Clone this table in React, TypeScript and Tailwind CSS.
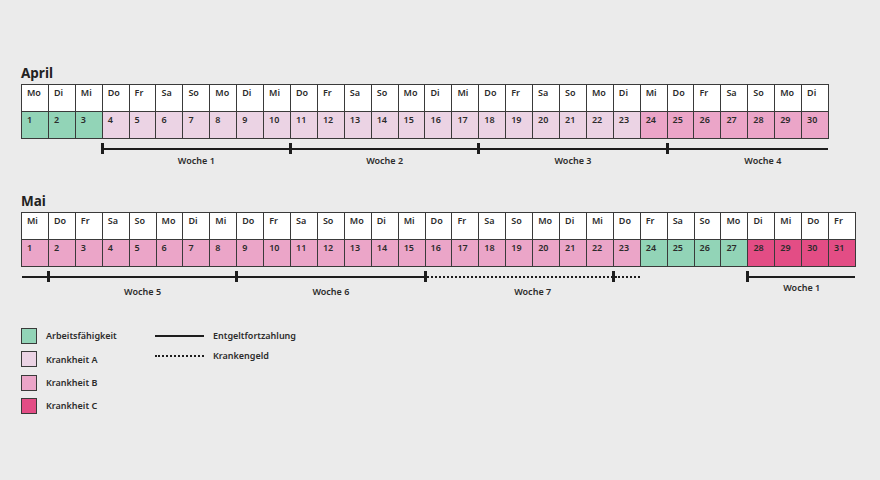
const days = ["Mo", "Di", "Mi", "Do", "Fr", "Sa", "So"]

const green = "bg-[#92d4b7]"
const pinkA = "bg-[#ebd3e4]"
const pinkB = "bg-[#eba5c8]"
const pinkC = "bg-[#e34d85]"

function cellColorApril(d: number) {
  if (d <= 3) return green
  if (d <= 23) return pinkA
  return pinkB
}

function cellColorMai(d: number) {
  if (d <= 23) return pinkB
  if (d <= 27) return green
  return pinkC
}

function MonthGrid({
  count,
  startDay,
  color,
  cols,
  width,
}: {
  count: number
  startDay: number
  color: (d: number) => string
  cols: string
  width: string
}) {
  const nums = Array.from({ length: count }, (_, i) => i + 1)
  return (
    <div className={`grid ${cols} ${width} gap-px bg-[#3a3a3a] p-px`}>
      {nums.map((n) => (
        <div key={"h" + n} className="h-[26px] bg-white pl-[5px] pt-[1px] leading-[13px]">
          {days[(startDay + n - 1) % 7]}
        </div>
      ))}
      {nums.map((n) => (
        <div key={"d" + n} className={`h-[26px] pl-[5px] pt-[1px] leading-[13px] ${color(n)}`}>
          {n}
        </div>
      ))}
    </div>
  )
}

function Seg({ className, tick = true, dotted = false }: { className: string; tick?: boolean; dotted?: boolean }) {
  return (
    <div className={`flex h-[11px] items-center ${className}`}>
      {tick && <div className="-ml-[2px] h-[11px] w-[3px] shrink-0 bg-[#1d1d1d]" />}
      {dotted ? (
        <div className="h-0 flex-1 border-t-2 border-dotted border-[#1d1d1d]" />
      ) : (
        <div className="h-[2px] flex-1 bg-[#1d1d1d]" />
      )}
    </div>
  )
}

export default function App() {
  return (
    <div
      className="h-[480px] w-[880px] overflow-hidden bg-[#ebebeb] pl-[21px] pt-[62px] text-[9px] font-semibold text-[#2b2b2b]"
      style={{ fontFamily: '"Noto Sans", "Open Sans", sans-serif' }}
    >
      <div className="h-[22px] text-[13.5px] font-bold leading-[22px] text-[#222]">April</div>
      <MonthGrid
        count={30}
        startDay={0}
        color={cellColorApril}
        cols="grid-cols-[repeat(30,minmax(0,1fr))]"
        width="w-[808px]"
      />
      <div className="mt-[4px] grid w-[808px] grid-cols-[repeat(30,minmax(0,1fr))] gap-x-px px-px">
        <Seg className="col-start-4 col-span-7" />
        <Seg className="col-start-11 col-span-7" />
        <Seg className="col-start-18 col-span-7" />
        <Seg className="col-start-25 col-span-6" />
        <div className="col-start-4 col-span-7 mt-[1px] text-center leading-[12px]">Woche 1</div>
        <div className="col-start-11 col-span-7 mt-[1px] text-center leading-[12px]">Woche 2</div>
        <div className="col-start-18 col-span-7 mt-[1px] text-center leading-[12px]">Woche 3</div>
        <div className="col-start-25 col-span-6 mt-[1px] pl-[30px] text-center leading-[12px]">Woche 4</div>
      </div>

      <div className="mt-[23px] h-[22px] text-[13.5px] font-bold leading-[22px] text-[#222]">Mai</div>
      <MonthGrid
        count={31}
        startDay={2}
        color={cellColorMai}
        cols="grid-cols-[repeat(31,minmax(0,1fr))]"
        width="w-[835px]"
      />
      <div className="mt-[4px] grid w-[835px] grid-cols-[repeat(31,minmax(0,1fr))] gap-x-px px-px">
        <Seg className="col-start-1 col-span-1" tick={false} />
        <Seg className="col-start-2 col-span-7" />
        <Seg className="col-start-9 col-span-7" />
        <Seg className="col-start-16 col-span-7" dotted />
        <Seg className="col-start-23 col-span-1" dotted />
        <Seg className="col-start-28 col-span-4" />
        <div className="col-start-2 col-span-7 mt-[4px] text-center leading-[12px]">Woche 5</div>
        <div className="col-start-9 col-span-7 mt-[4px] text-center leading-[12px]">Woche 6</div>
        <div className="col-start-16 col-span-8 mt-[4px] text-center leading-[12px]">Woche 7</div>
        <div className="col-start-28 col-span-4 mt-0 text-center leading-[12px]">Woche 1</div>
      </div>

      <div className="mt-[30px] flex">
        <div className="flex w-[134px] flex-col gap-[7.3px]">
          {[
            [green, "Arbeitsfähigkeit"],
            [pinkA, "Krankheit A"],
            [pinkB, "Krankheit B"],
            [pinkC, "Krankheit C"],
          ].map(([c, label]) => (
            <div key={label} className="flex h-4 items-center gap-[9px]">
              <div className={`h-4 w-4 border border-[#3a3a3a] ${c}`} />
              <span>{label}</span>
            </div>
          ))}
        </div>
        <div className="flex flex-col gap-[4px]">
          <div className="flex h-4 items-center gap-[9px]">
            <div className="h-[2px] w-[49px] bg-[#1d1d1d]" />
            <span>Entgeltfortzahlung</span>
          </div>
          <div className="flex h-4 items-center gap-[9px]">
            <div className="w-[49px] border-t-2 border-dotted border-[#1d1d1d]" />
            <span>Krankengeld</span>
          </div>
        </div>
      </div>
    </div>
  )
}
